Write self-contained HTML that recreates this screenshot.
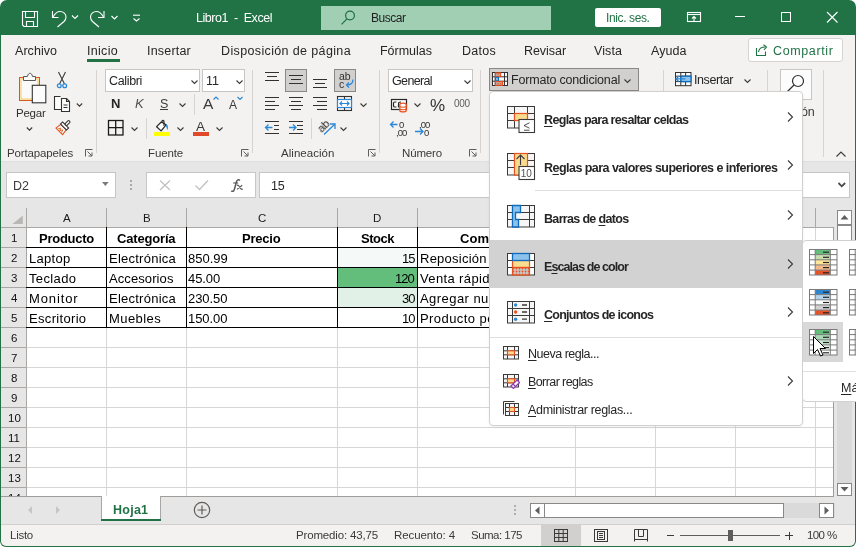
<!DOCTYPE html>
<html><head><meta charset="utf-8"><style>
html,body{margin:0;padding:0;}
body{width:856px;height:547px;position:relative;overflow:hidden;background:#ffffff;font-family:"Liberation Sans",sans-serif;}
body>div,body>svg{position:absolute;}
body>div.t{will-change:transform;}
u{text-decoration:underline;text-underline-offset:2px;text-decoration-thickness:1px;}
</style></head><body>
<div style="left:0px;top:0px;width:856px;height:547px;background:#ffffff;"></div>
<div style="left:0px;top:0px;width:856px;height:547px;background:#217346;border-radius:7px 7px 6px 6px;"></div>
<div style="left:1px;top:35px;width:854px;height:127px;background:#f3f2f1;"></div>
<div style="left:1px;top:161px;width:854px;height:1px;background:#e1dfdd;"></div>
<div style="left:1px;top:162px;width:854px;height:46px;background:#e6e6e6;"></div>
<div style="left:1px;top:208px;width:833px;height:288px;background:#ffffff;"></div>
<div style="left:1px;top:496px;width:854px;height:28px;background:#e6e6e6;"></div>
<div style="left:1px;top:496px;width:854px;height:1px;background:#c8c6c4;"></div>
<div style="left:1px;top:525px;width:854px;height:21px;background:#f3f2f1;border-radius:0 0 5px 5px;"></div>
<div style="left:1px;top:524px;width:854px;height:1px;background:#d2d0ce;"></div>
<div class="t" style="left:196.00px;top:10.69px;font:normal 12.5px 'Liberation Sans';color:#ffffff;white-space:pre;letter-spacing:-0.461px;">Libro1  -  Excel</div>
<div style="left:321px;top:6px;width:230px;height:24px;background:#a0cfb4;"></div>
<div class="t" style="left:371.30px;top:11.14px;font:normal 12px 'Liberation Sans';color:#1f1f1f;white-space:pre;letter-spacing:-0.477px;">Buscar</div>
<div style="left:595px;top:8px;width:66px;height:19px;background:#ffffff;border-radius:2px;"></div>
<div class="t" style="left:606.00px;top:11.14px;font:normal 12px 'Liberation Sans';color:#217346;white-space:pre;letter-spacing:-0.386px;">Inic. ses.</div>
<div class="t" style="left:15.00px;top:43.69px;font:normal 12.5px 'Liberation Sans';color:#262626;white-space:pre;letter-spacing:0.045px;">Archivo</div>
<div class="t" style="left:87.00px;top:43.69px;font:normal 12.5px 'Liberation Sans';color:#262626;white-space:pre;letter-spacing:0.302px;">Inicio</div>
<div class="t" style="left:147.00px;top:43.69px;font:normal 12.5px 'Liberation Sans';color:#262626;white-space:pre;letter-spacing:0.201px;">Insertar</div>
<div class="t" style="left:221.00px;top:43.69px;font:normal 12.5px 'Liberation Sans';color:#262626;white-space:pre;letter-spacing:0.366px;">Disposición de página</div>
<div class="t" style="left:380.00px;top:43.69px;font:normal 12.5px 'Liberation Sans';color:#262626;white-space:pre;letter-spacing:-0.012px;">Fórmulas</div>
<div class="t" style="left:462.00px;top:43.69px;font:normal 12.5px 'Liberation Sans';color:#262626;white-space:pre;letter-spacing:0.269px;">Datos</div>
<div class="t" style="left:524.00px;top:43.69px;font:normal 12.5px 'Liberation Sans';color:#262626;white-space:pre;letter-spacing:-0.054px;">Revisar</div>
<div class="t" style="left:594.00px;top:43.69px;font:normal 12.5px 'Liberation Sans';color:#262626;white-space:pre;letter-spacing:0.084px;">Vista</div>
<div class="t" style="left:651.00px;top:43.69px;font:normal 12.5px 'Liberation Sans';color:#262626;white-space:pre;letter-spacing:0.056px;">Ayuda</div>
<div style="left:87px;top:59px;width:33px;height:3px;background:#217346;"></div>
<div style="left:748px;top:38px;width:95px;height:24px;background:#ffffff;box-sizing:border-box;border:1px solid #d6d4d2;border-radius:3px;"></div>
<div class="t" style="left:772.60px;top:43.69px;font:normal 12.5px 'Liberation Sans';color:#217346;white-space:pre;letter-spacing:0.625px;">Compartir</div>
<svg style="left:754px;top:43px;" width="16" height="15" viewBox="0 0 16 15"><g fill="none" stroke="#217346" stroke-width="1.1"><path d="M2.5 5V12.5H11.5V8.5"/><path d="M4.5 9C5 6 7.5 4 11 4"/><path d="M9.5 1.8L12.5 4L10 6.8"/></g></svg>
<div style="left:6px;top:172px;width:110px;height:26px;background:#ffffff;box-sizing:border-box;border:1px solid #c8c6c4;"></div>
<div class="t" style="left:13.00px;top:178.69px;font:normal 12.5px 'Liberation Sans';color:#3b3a39;white-space:pre;letter-spacing:0.008px;">D2</div>
<svg style="left:100px;top:180px;" width="10" height="8" viewBox="0 0 10 8"><path d="M2 2H8.7L5.35 6Z" fill="#7a7a7a"/></svg>
<div style="left:130px;top:180px;width:2px;height:2px;background:#a8a8a8;"></div>
<div style="left:130px;top:184px;width:2px;height:2px;background:#a8a8a8;"></div>
<div style="left:130px;top:188px;width:2px;height:2px;background:#a8a8a8;"></div>
<div style="left:146px;top:172px;width:110px;height:26px;background:#ffffff;box-sizing:border-box;border:1px solid #c8c6c4;"></div>
<svg style="left:157px;top:178px;" width="16" height="14" viewBox="0 0 16 14"><path d="M3 2.5L13 12M13 2.5L3 12" fill="none" stroke="#c2c2c2" stroke-width="1.3"/></svg>
<svg style="left:193px;top:178px;" width="17" height="14" viewBox="0 0 17 14"><path d="M2.5 7.5L6.5 11.5L15 2.5" fill="none" stroke="#c2c2c2" stroke-width="1.4"/></svg>
<svg style="left:225px;top:174px;" width="25" height="22" viewBox="0 0 25 22"><g fill="none" stroke="#5a5a5a"><path d="M15 6.3C13.5 5.2 12 5.8 11.4 8L9.3 15.6C8.8 17.4 7.5 17.8 6.3 16.8" stroke-width="1.5"/><path d="M8.2 9H13.2" stroke-width="1.1"/><path d="M11.8 11.3C13 11 13.8 11.5 14.3 12.5L15.8 14.6C16.3 15.3 17 15.5 17.8 15M17.2 11.3L12 15.4" stroke-width="1.2"/></g></svg>
<div style="left:259px;top:172px;width:591px;height:26px;background:#ffffff;box-sizing:border-box;border:1px solid #c8c6c4;"></div>
<div class="t" style="left:271.00px;top:178.69px;font:normal 12.5px 'Liberation Sans';color:#262626;white-space:pre;letter-spacing:-0.203px;">15</div>
<div style="left:1px;top:208px;width:833px;height:20px;background:#e6e6e6;"></div>
<div style="left:1px;top:208px;width:26px;height:288px;background:#e6e6e6;"></div>
<div style="left:106px;top:228px;width:1px;height:268px;background:#d6d6d6;"></div>
<div style="left:186px;top:228px;width:1px;height:268px;background:#d6d6d6;"></div>
<div style="left:337px;top:228px;width:1px;height:268px;background:#d6d6d6;"></div>
<div style="left:417px;top:228px;width:1px;height:268px;background:#d6d6d6;"></div>
<div style="left:575px;top:228px;width:1px;height:268px;background:#d6d6d6;"></div>
<div style="left:655px;top:228px;width:1px;height:268px;background:#d6d6d6;"></div>
<div style="left:735px;top:228px;width:1px;height:268px;background:#d6d6d6;"></div>
<div style="left:815px;top:228px;width:1px;height:268px;background:#d6d6d6;"></div>
<div style="left:27px;top:247px;width:807px;height:1px;background:#d6d6d6;"></div>
<div style="left:27px;top:267px;width:807px;height:1px;background:#d6d6d6;"></div>
<div style="left:27px;top:287px;width:807px;height:1px;background:#d6d6d6;"></div>
<div style="left:27px;top:307px;width:807px;height:1px;background:#d6d6d6;"></div>
<div style="left:27px;top:327px;width:807px;height:1px;background:#d6d6d6;"></div>
<div style="left:27px;top:347px;width:807px;height:1px;background:#d6d6d6;"></div>
<div style="left:27px;top:367px;width:807px;height:1px;background:#d6d6d6;"></div>
<div style="left:27px;top:387px;width:807px;height:1px;background:#d6d6d6;"></div>
<div style="left:27px;top:407px;width:807px;height:1px;background:#d6d6d6;"></div>
<div style="left:27px;top:427px;width:807px;height:1px;background:#d6d6d6;"></div>
<div style="left:27px;top:447px;width:807px;height:1px;background:#d6d6d6;"></div>
<div style="left:27px;top:467px;width:807px;height:1px;background:#d6d6d6;"></div>
<div style="left:27px;top:487px;width:807px;height:1px;background:#d6d6d6;"></div>
<div style="left:27px;top:507px;width:807px;height:1px;background:#d6d6d6;"></div>
<div style="left:106px;top:208px;width:1px;height:20px;background:#aba7a5;"></div>
<div style="left:186px;top:208px;width:1px;height:20px;background:#aba7a5;"></div>
<div style="left:337px;top:208px;width:1px;height:20px;background:#aba7a5;"></div>
<div style="left:417px;top:208px;width:1px;height:20px;background:#aba7a5;"></div>
<div style="left:575px;top:208px;width:1px;height:20px;background:#aba7a5;"></div>
<div style="left:655px;top:208px;width:1px;height:20px;background:#aba7a5;"></div>
<div style="left:735px;top:208px;width:1px;height:20px;background:#aba7a5;"></div>
<div style="left:815px;top:208px;width:1px;height:20px;background:#aba7a5;"></div>
<div style="left:26px;top:208px;width:1px;height:288px;background:#aba7a5;"></div>
<div style="left:1px;top:227px;width:833px;height:1px;background:#aba7a5;"></div>
<div style="left:1px;top:247px;width:26px;height:1px;background:#aba7a5;"></div>
<div style="left:1px;top:267px;width:26px;height:1px;background:#aba7a5;"></div>
<div style="left:1px;top:287px;width:26px;height:1px;background:#aba7a5;"></div>
<div style="left:1px;top:307px;width:26px;height:1px;background:#aba7a5;"></div>
<div style="left:1px;top:327px;width:26px;height:1px;background:#aba7a5;"></div>
<div style="left:1px;top:347px;width:26px;height:1px;background:#aba7a5;"></div>
<div style="left:1px;top:367px;width:26px;height:1px;background:#aba7a5;"></div>
<div style="left:1px;top:387px;width:26px;height:1px;background:#aba7a5;"></div>
<div style="left:1px;top:407px;width:26px;height:1px;background:#aba7a5;"></div>
<div style="left:1px;top:427px;width:26px;height:1px;background:#aba7a5;"></div>
<div style="left:1px;top:447px;width:26px;height:1px;background:#aba7a5;"></div>
<div style="left:1px;top:467px;width:26px;height:1px;background:#aba7a5;"></div>
<div style="left:1px;top:487px;width:26px;height:1px;background:#aba7a5;"></div>
<div style="left:1px;top:507px;width:26px;height:1px;background:#aba7a5;"></div>
<svg style="left:10px;top:214px;" width="14" height="11" viewBox="0 0 14 11"><path d="M12.8 1.5V10H2.5Z" fill="#b9b7b5"/></svg>
<div class="t" style="left:62.66px;top:211.59px;font:normal 11.5px 'Liberation Sans';color:#1a1a1a;white-space:pre;">A</div>
<div class="t" style="left:142.66px;top:211.59px;font:normal 11.5px 'Liberation Sans';color:#1a1a1a;white-space:pre;">B</div>
<div class="t" style="left:257.84px;top:211.59px;font:normal 11.5px 'Liberation Sans';color:#1a1a1a;white-space:pre;">C</div>
<div class="t" style="left:373.34px;top:211.59px;font:normal 11.5px 'Liberation Sans';color:#1a1a1a;white-space:pre;">D</div>
<div class="t" style="left:492.66px;top:211.59px;font:normal 11.5px 'Liberation Sans';color:#1a1a1a;white-space:pre;">E</div>
<div class="t" style="left:611.98px;top:211.59px;font:normal 11.5px 'Liberation Sans';color:#1a1a1a;white-space:pre;">F</div>
<div class="t" style="left:691.02px;top:211.59px;font:normal 11.5px 'Liberation Sans';color:#1a1a1a;white-space:pre;">G</div>
<div class="t" style="left:771.34px;top:211.59px;font:normal 11.5px 'Liberation Sans';color:#1a1a1a;white-space:pre;">H</div>
<div class="t" style="left:10.80px;top:232.39px;font:normal 11.5px 'Liberation Sans';color:#111111;white-space:pre;">1</div>
<div class="t" style="left:10.80px;top:252.39px;font:normal 11.5px 'Liberation Sans';color:#111111;white-space:pre;">2</div>
<div class="t" style="left:10.80px;top:272.39px;font:normal 11.5px 'Liberation Sans';color:#111111;white-space:pre;">3</div>
<div class="t" style="left:10.80px;top:292.39px;font:normal 11.5px 'Liberation Sans';color:#111111;white-space:pre;">4</div>
<div class="t" style="left:10.80px;top:312.39px;font:normal 11.5px 'Liberation Sans';color:#111111;white-space:pre;">5</div>
<div class="t" style="left:10.80px;top:332.39px;font:normal 11.5px 'Liberation Sans';color:#111111;white-space:pre;">6</div>
<div class="t" style="left:10.80px;top:352.39px;font:normal 11.5px 'Liberation Sans';color:#111111;white-space:pre;">7</div>
<div class="t" style="left:10.80px;top:372.39px;font:normal 11.5px 'Liberation Sans';color:#111111;white-space:pre;">8</div>
<div class="t" style="left:10.80px;top:392.39px;font:normal 11.5px 'Liberation Sans';color:#111111;white-space:pre;">9</div>
<div class="t" style="left:7.60px;top:412.39px;font:normal 11.5px 'Liberation Sans';color:#111111;white-space:pre;">10</div>
<div class="t" style="left:8.02px;top:432.39px;font:normal 11.5px 'Liberation Sans';color:#111111;white-space:pre;">11</div>
<div class="t" style="left:7.60px;top:452.39px;font:normal 11.5px 'Liberation Sans';color:#111111;white-space:pre;">12</div>
<div class="t" style="left:7.60px;top:472.39px;font:normal 11.5px 'Liberation Sans';color:#111111;white-space:pre;">13</div>
<div class="t" style="left:7.60px;top:492.39px;font:normal 11.5px 'Liberation Sans';color:#111111;white-space:pre;">14</div>
<div style="left:337px;top:248px;width:80px;height:19px;background:#f5f9f8;"></div>
<div style="left:337px;top:268px;width:80px;height:19px;background:#63be7b;"></div>
<div style="left:337px;top:288px;width:80px;height:19px;background:#e2f1e7;"></div>
<div style="left:26px;top:247px;width:550px;height:1px;background:#000000;"></div>
<div style="left:26px;top:267px;width:550px;height:1px;background:#000000;"></div>
<div style="left:26px;top:287px;width:550px;height:1px;background:#000000;"></div>
<div style="left:26px;top:307px;width:550px;height:1px;background:#000000;"></div>
<div style="left:26px;top:327px;width:550px;height:1px;background:#000000;"></div>
<div style="left:106px;top:227px;width:1px;height:101px;background:#000000;"></div>
<div style="left:186px;top:227px;width:1px;height:101px;background:#000000;"></div>
<div style="left:337px;top:227px;width:1px;height:101px;background:#000000;"></div>
<div style="left:417px;top:227px;width:1px;height:101px;background:#000000;"></div>
<div style="left:575px;top:227px;width:1px;height:101px;background:#000000;"></div>
<div class="t" style="left:38.50px;top:230.74px;font:bold 13px 'Liberation Sans';color:#000000;white-space:pre;letter-spacing:-0.258px;">Producto</div>
<div class="t" style="left:117.30px;top:230.74px;font:bold 13px 'Liberation Sans';color:#000000;white-space:pre;letter-spacing:-0.174px;">Categoría</div>
<div class="t" style="left:241.70px;top:230.74px;font:bold 13px 'Liberation Sans';color:#000000;white-space:pre;letter-spacing:-0.208px;">Precio</div>
<div class="t" style="left:361.30px;top:230.74px;font:bold 13px 'Liberation Sans';color:#000000;white-space:pre;letter-spacing:-0.481px;">Stock</div>
<div class="t" style="left:459.60px;top:230.74px;font:bold 13px 'Liberation Sans';color:#000000;white-space:pre;letter-spacing:0.077px;">Comentario</div>
<div class="t" style="left:28.90px;top:250.74px;font:normal 13px 'Liberation Sans';color:#000000;white-space:pre;letter-spacing:0.289px;">Laptop</div>
<div class="t" style="left:109.30px;top:250.74px;font:normal 13px 'Liberation Sans';color:#000000;white-space:pre;letter-spacing:0.244px;">Electrónica</div>
<div class="t" style="left:188.20px;top:250.74px;font:normal 13px 'Liberation Sans';color:#000000;white-space:pre;letter-spacing:-0.011px;">850.99</div>
<div class="t" style="left:401.50px;top:250.74px;font:normal 13px 'Liberation Sans';color:#000000;white-space:pre;letter-spacing:-1.084px;">15</div>
<div class="t" style="left:420.00px;top:250.74px;font:normal 13px 'Liberation Sans';color:#000000;white-space:pre;letter-spacing:0.246px;">Reposición  </div>
<div class="t" style="left:28.90px;top:270.74px;font:normal 13px 'Liberation Sans';color:#000000;white-space:pre;letter-spacing:0.370px;">Teclado</div>
<div class="t" style="left:109.30px;top:270.74px;font:normal 13px 'Liberation Sans';color:#000000;white-space:pre;letter-spacing:0.092px;">Accesorios</div>
<div class="t" style="left:188.20px;top:270.74px;font:normal 13px 'Liberation Sans';color:#000000;white-space:pre;letter-spacing:-0.069px;">45.00</div>
<div class="t" style="left:395.20px;top:270.74px;font:normal 13px 'Liberation Sans';color:#000000;white-space:pre;letter-spacing:-1.034px;">120</div>
<div class="t" style="left:420.00px;top:270.74px;font:normal 13px 'Liberation Sans';color:#000000;white-space:pre;letter-spacing:0.374px;">Venta rápida</div>
<div class="t" style="left:28.90px;top:290.74px;font:normal 13px 'Liberation Sans';color:#000000;white-space:pre;letter-spacing:0.877px;">Monitor</div>
<div class="t" style="left:109.30px;top:290.74px;font:normal 13px 'Liberation Sans';color:#000000;white-space:pre;letter-spacing:0.244px;">Electrónica</div>
<div class="t" style="left:188.20px;top:290.74px;font:normal 13px 'Liberation Sans';color:#000000;white-space:pre;letter-spacing:-0.078px;">230.50</div>
<div class="t" style="left:401.50px;top:290.74px;font:normal 13px 'Liberation Sans';color:#000000;white-space:pre;letter-spacing:-1.084px;">30</div>
<div class="t" style="left:420.00px;top:290.74px;font:normal 13px 'Liberation Sans';color:#000000;white-space:pre;letter-spacing:0.440px;">Agregar nuevo</div>
<div class="t" style="left:28.90px;top:310.74px;font:normal 13px 'Liberation Sans';color:#000000;white-space:pre;letter-spacing:0.321px;">Escritorio</div>
<div class="t" style="left:109.30px;top:310.74px;font:normal 13px 'Liberation Sans';color:#000000;white-space:pre;letter-spacing:0.437px;">Muebles</div>
<div class="t" style="left:188.20px;top:310.74px;font:normal 13px 'Liberation Sans';color:#000000;white-space:pre;letter-spacing:-0.078px;">150.00</div>
<div class="t" style="left:401.50px;top:310.74px;font:normal 13px 'Liberation Sans';color:#000000;white-space:pre;letter-spacing:-1.084px;">10</div>
<div class="t" style="left:420.00px;top:310.74px;font:normal 13px 'Liberation Sans';color:#000000;white-space:pre;letter-spacing:0.437px;">Producto popular</div>
<svg style="left:20px;top:9px;" width="20" height="20" viewBox="0 0 20 20"><g fill="none" stroke="#ffffff" stroke-width="1.1"><path d="M2.5 2.5H17.5V17.5H4L2.5 16Z"/><path d="M5.5 2.5V8.5H14.5V2.5"/><path d="M6.5 17.5V12.5H13.5V17.5"/></g></svg>
<svg style="left:49px;top:9px;" width="20" height="20" viewBox="0 0 20 20"><g fill="none" stroke="#ffffff" stroke-width="1.1"><path d="M3.5 2V8.5H9.5"/><path d="M4 8C6 4.5 8.5 2.5 11 2.5C14.5 2.5 17 5 17 8C17 10 16 11.5 15 12.5L8.5 18"/></g></svg>
<svg style="left:71px;top:14px;" width="8" height="6" viewBox="0 0 8 6"><path d="M1 1.5L4 4.5L7 1.5" fill="none" stroke="#ffffff" stroke-width="1.1"/></svg>
<svg style="left:89px;top:9px;" width="20" height="20" viewBox="0 0 20 20"><g transform="translate(18.5 0) scale(-1 1)" fill="none" stroke="#ffffff" stroke-width="1.1"><path d="M3.5 2V8.5H9.5"/><path d="M4 8C6 4.5 8.5 2.5 11 2.5C14.5 2.5 17 5 17 8C17 10 16 11.5 15 12.5L8.5 18"/></g></svg>
<svg style="left:110px;top:14px;" width="9" height="7" viewBox="0 0 9 7"><path d="M1.5 2L4.5 5L7.5 2" fill="none" stroke="#ffffff" stroke-width="1.1"/></svg>
<svg style="left:131px;top:13px;" width="11" height="10" viewBox="0 0 11 10"><g fill="none" stroke="#ffffff" stroke-width="1.1"><path d="M2 2.2H9"/><path d="M2.5 5.5L5.5 8L8.5 5.5"/></g></svg>
<svg style="left:338px;top:8px;" width="20" height="20" viewBox="0 0 20 20"><g fill="none" stroke="#1e6e3e" stroke-width="1.2"><circle cx="12" cy="7.5" r="4.4"/><path d="M9 10.8L3.5 16.3"/></g></svg>
<svg style="left:684px;top:10px;" width="18" height="14" viewBox="0 0 18 14"><g fill="none" stroke="#ffffff" stroke-width="1.1"><rect x="3.5" y="2.5" width="13" height="9"/><path d="M3.5 4.5H16.5"/><path d="M10 11V6.5M8 8.5L10 6.5L12 8.5"/></g></svg>
<div style="left:735px;top:16px;width:10px;height:1px;background:#ffffff;"></div>
<svg style="left:779px;top:10px;" width="14" height="14" viewBox="0 0 14 14"><rect x="2.5" y="2.5" width="9" height="9" fill="none" stroke="#ffffff" stroke-width="1"/></svg>
<svg style="left:825px;top:10px;" width="14" height="14" viewBox="0 0 14 14"><path d="M2 2L12.5 12.5M12.5 2L2 12.5" fill="none" stroke="#ffffff" stroke-width="1.1"/></svg>
<svg style="left:17px;top:71px;" width="32" height="34" viewBox="0 0 32 34"><g>
<rect x="2.5" y="6.5" width="20" height="23" fill="#fdf3dc" stroke="#d65a1e" stroke-width="1"/>
<rect x="4" y="8" width="17" height="20" fill="#fafafa" stroke="#f6d27a" stroke-width="1.2"/>
<path d="M6.5 9.5V5.5H10.5C11 3 12 2.3 13 2.3C14 2.3 15 3 15.5 5.5H18.5V9.5Z" fill="#fafafa" stroke="#5a5a5a" stroke-width="1"/>
<rect x="15.3" y="14.3" width="13.5" height="17.5" fill="#fcfcfc" stroke="#333333" stroke-width="1.1"/>
</g></svg>
<div class="t" style="left:15.50px;top:107.09px;font:normal 11.5px 'Liberation Sans';color:#323130;white-space:pre;letter-spacing:-0.237px;">Pegar</div>
<svg style="left:25px;top:125px;" width="9" height="8" viewBox="0 0 9 8"><path d="M1.8 2.5L4.5 5.2L7.2 2.5" fill="none" stroke="#3b3a39" stroke-width="1.1"/></svg>
<svg style="left:55px;top:71px;" width="14" height="18" viewBox="0 0 14 18"><g fill="none" stroke-width="1.1">
<path d="M3.5 1L9.5 13M10.5 1L4.5 13" stroke="#3b3a39"/>
<circle cx="4.3" cy="14.8" r="1.9" stroke="#2b88d8" stroke-width="1.3"/>
<circle cx="9.7" cy="14.8" r="1.9" stroke="#2b88d8" stroke-width="1.3"/>
</g></svg>
<svg style="left:52px;top:94px;" width="20" height="20" viewBox="0 0 20 20"><g fill="#fcfcfc" stroke="#333333" stroke-width="1.1">
<path d="M9 15.5H2.5V2.5H8.5"/>
<path d="M9.5 4.5H14.5L17.5 7.5V17.5H9.5Z"/>
<path d="M14.5 4.5V7.5H17.5" fill="none"/>
<path d="M11.5 11H15.5M11.5 13.5H15.5" fill="none" stroke-width="1"/>
</g></svg>
<svg style="left:75px;top:101px;" width="9" height="8" viewBox="0 0 9 8"><path d="M1.8 2.5L4.5 5.2L7.2 2.5" fill="none" stroke="#3b3a39" stroke-width="1.1"/></svg>
<svg style="left:50px;top:114px;" width="26" height="24" viewBox="0 0 26 24"><g transform="translate(13.2 13.4) rotate(45) scale(0.85)" stroke-width="1.25">
<path d="M-4.5 -0.5L-5.5 6.5H5.5L4.5 -0.5Z" fill="#fcfcfc" stroke="#e0531f"/>
<path d="M-3 5.5L-1.5 2.5L0 5.5L1.5 2.5L3 5.5" stroke="#e0531f" stroke-width="0.9" fill="#fbe3a0"/>
<rect x="-5" y="-4" width="10" height="3.5" fill="#fcfcfc" stroke="#333"/>
<rect x="-1.5" y="-10.5" width="3" height="6.5" rx="1.2" fill="#fcfcfc" stroke="#333"/>
</g></svg>
<div class="t" style="left:6.70px;top:147.09px;font:normal 11.5px 'Liberation Sans';color:#3b3a39;white-space:pre;letter-spacing:-0.148px;">Portapapeles</div>
<svg style="left:84px;top:148px;" width="10" height="10" viewBox="0 0 10 10"><g fill="none" stroke="#605e5c" stroke-width="1"><path d="M1.5 8.5V1.5H8.5"/><path d="M3.5 3.5L8 8M8 4.5V8H4.5"/></g></svg>
<div style="left:96px;top:70px;width:1px;height:83px;background:#d6d4d2;"></div>
<div style="left:105px;top:69px;width:95px;height:23px;background:#ffffff;box-sizing:border-box;border:1px solid #c8c6c4;"></div>
<div class="t" style="left:108.50px;top:73.69px;font:normal 12.5px 'Liberation Sans';color:#262626;white-space:pre;letter-spacing:-0.348px;">Calibri</div>
<svg style="left:189.5px;top:77.5px;" width="9" height="8" viewBox="0 0 9 8"><path d="M1.5 2.5L4.5 5.5L7.5 2.5" fill="none" stroke="#3b3a39" stroke-width="1.1"/></svg>
<div style="left:202px;top:69px;width:43px;height:23px;background:#ffffff;box-sizing:border-box;border:1px solid #c8c6c4;"></div>
<div class="t" style="left:205.50px;top:73.69px;font:normal 12.5px 'Liberation Sans';color:#262626;white-space:pre;">11</div>
<svg style="left:234.5px;top:77.5px;" width="9" height="8" viewBox="0 0 9 8"><path d="M1.5 2.5L4.5 5.5L7.5 2.5" fill="none" stroke="#3b3a39" stroke-width="1.1"/></svg>
<div class="t" style="left:110.50px;top:96.24px;font:bold 13px 'Liberation Sans';color:#262626;white-space:pre;letter-spacing:0.609px;">N</div>
<div class="t" style="left:135.00px;top:96.24px;font:normal 13px 'Liberation Sans';color:#505050;white-space:pre;letter-spacing:0.328px;font-style:italic;">K</div>
<div class="t" style="left:160.00px;top:96.69px;font:normal 12.5px 'Liberation Sans';color:#3b3a39;white-space:pre;letter-spacing:-0.344px;">S</div>
<div style="left:160px;top:109px;width:8px;height:1px;background:#3b3a39;"></div>
<svg style="left:177.5px;top:100.5px;" width="9" height="8" viewBox="0 0 9 8"><path d="M1.5 2.5L4.5 5.5L7.5 2.5" fill="none" stroke="#3b3a39" stroke-width="1.1"/></svg>
<div style="left:194px;top:94px;width:1px;height:21px;background:#d6d4d2;"></div>
<div class="t" style="left:203.00px;top:94.67px;font:normal 15.5px 'Liberation Sans';color:#3b3a39;white-space:pre;letter-spacing:0.656px;">A</div>
<svg style="left:212px;top:95px;" width="8" height="6" viewBox="0 0 8 6"><path d="M1.5 4.5L4 2L6.5 4.5" fill="none" stroke="#2b88d8" stroke-width="1.2"/></svg>
<div class="t" style="left:228.50px;top:97.84px;font:normal 12px 'Liberation Sans';color:#3b3a39;white-space:pre;letter-spacing:0.484px;">A</div>
<svg style="left:236px;top:95px;" width="8" height="6" viewBox="0 0 8 6"><path d="M1.5 2L4 4.5L6.5 2" fill="none" stroke="#2b88d8" stroke-width="1.2"/></svg>
<svg style="left:106px;top:118px;" width="19" height="19" viewBox="0 0 19 19"><g fill="none" stroke="#1b1b1b" stroke-width="1.3"><rect x="2.5" y="2.5" width="14.5" height="14.5"/><path d="M9.7 2.5V17M2.5 9.7H17"/></g></svg>
<svg style="left:129.5px;top:124.5px;" width="9" height="8" viewBox="0 0 9 8"><path d="M1.5 2.5L4.5 5.5L7.5 2.5" fill="none" stroke="#3b3a39" stroke-width="1.1"/></svg>
<div style="left:146px;top:118px;width:1px;height:21px;background:#d6d4d2;"></div>
<svg style="left:150px;top:116px;" width="24" height="18" viewBox="0 0 24 18"><g stroke-width="1.2">
<path d="M6.6 10.7L11.3 6L16.1 8.8L11.1 14.9Z" fill="#fcfcfc" stroke="#262626" stroke-linejoin="round"/>
<path d="M11.8 6.5C11.8 4 13.9 3.5 14 6V9.8" fill="none" stroke="#262626"/>
<path d="M15.8 8.3C17.6 8.2 18.6 10.5 17.6 14.2C16.8 12.5 16.4 11 16 10Z" fill="#2b88d8"/>
</g></svg>
<div style="left:154px;top:132px;width:16px;height:4px;background:#ffff00;"></div>
<svg style="left:175.5px;top:124.5px;" width="9" height="8" viewBox="0 0 9 8"><path d="M1.5 2.5L4.5 5.5L7.5 2.5" fill="none" stroke="#3b3a39" stroke-width="1.1"/></svg>
<div class="t" style="left:195.50px;top:118.78px;font:normal 13.5px 'Liberation Sans';color:#3b3a39;white-space:pre;letter-spacing:1.484px;">A</div>
<div style="left:193px;top:132px;width:16px;height:4px;background:#e0492a;"></div>
<svg style="left:214.5px;top:124.5px;" width="9" height="8" viewBox="0 0 9 8"><path d="M1.5 2.5L4.5 5.5L7.5 2.5" fill="none" stroke="#3b3a39" stroke-width="1.1"/></svg>
<div class="t" style="left:148.30px;top:146.89px;font:normal 11.5px 'Liberation Sans';color:#3b3a39;white-space:pre;letter-spacing:-0.135px;">Fuente</div>
<svg style="left:240px;top:148px;" width="10" height="10" viewBox="0 0 10 10"><g fill="none" stroke="#605e5c" stroke-width="1"><path d="M1.5 8.5V1.5H8.5"/><path d="M3.5 3.5L8 8M8 4.5V8H4.5"/></g></svg>
<div style="left:252px;top:70px;width:1px;height:83px;background:#d6d4d2;"></div>
<div style="left:265px;top:72px;width:14px;height:1px;background:#323130;"></div>
<div style="left:267px;top:76px;width:10px;height:1px;background:#323130;"></div>
<div style="left:265px;top:80px;width:14px;height:1px;background:#323130;"></div>
<div style="left:285px;top:69px;width:22px;height:23px;background:#d2d0ce;box-sizing:border-box;border:1px solid #8a8886;"></div>
<div style="left:289px;top:75px;width:14px;height:1px;background:#323130;"></div>
<div style="left:291px;top:79px;width:10px;height:1px;background:#323130;"></div>
<div style="left:289px;top:83px;width:14px;height:1px;background:#323130;"></div>
<div style="left:313px;top:79px;width:14px;height:1px;background:#323130;"></div>
<div style="left:315px;top:83px;width:10px;height:1px;background:#323130;"></div>
<div style="left:313px;top:87px;width:14px;height:1px;background:#323130;"></div>
<div style="left:265px;top:97px;width:14px;height:1px;background:#323130;"></div>
<div style="left:265px;top:101px;width:10px;height:1px;background:#323130;"></div>
<div style="left:265px;top:105px;width:14px;height:1px;background:#323130;"></div>
<div style="left:265px;top:109px;width:10px;height:1px;background:#323130;"></div>
<div style="left:289px;top:97px;width:14px;height:1px;background:#323130;"></div>
<div style="left:291px;top:101px;width:10px;height:1px;background:#323130;"></div>
<div style="left:289px;top:105px;width:14px;height:1px;background:#323130;"></div>
<div style="left:291px;top:109px;width:10px;height:1px;background:#323130;"></div>
<div style="left:313px;top:97px;width:14px;height:1px;background:#323130;"></div>
<div style="left:317px;top:101px;width:10px;height:1px;background:#323130;"></div>
<div style="left:313px;top:105px;width:14px;height:1px;background:#323130;"></div>
<div style="left:317px;top:109px;width:10px;height:1px;background:#323130;"></div>
<div style="left:334px;top:69px;width:22px;height:23px;background:#d2d0ce;box-sizing:border-box;border:1px solid #8a8886;"></div>
<div class="t" style="left:339.30px;top:70.30px;font:normal 10.5px 'Liberation Sans';color:#323130;white-space:pre;letter-spacing:-0.094px;">ab</div>
<div class="t" style="left:339.30px;top:77.90px;font:normal 10.5px 'Liberation Sans';color:#323130;white-space:pre;letter-spacing:0.250px;">c</div>
<svg style="left:344px;top:78px;" width="12" height="10" viewBox="0 0 12 10"><g fill="none" stroke="#2b88d8" stroke-width="1.3"><path d="M9 1.5C9 5 7 7 3 7"/><path d="M5 4.5L2.5 7L5 9.5"/></g></svg>
<svg style="left:336px;top:95px;" width="17" height="17" viewBox="0 0 17 17"><g fill="none" stroke-width="1.1">
<rect x="1.5" y="1.5" width="14" height="14" stroke="#323130"/>
<path d="M8.5 1.5V4.5M8.5 12.5V15.5" stroke="#323130"/>
<rect x="1.5" y="4.5" width="14" height="8" stroke="#2b88d8" stroke-width="1.2" fill="#ffffff"/>
<path d="M4 8.5H13M6 6.5L4 8.5L6 10.5M11 6.5L13 8.5L11 10.5" stroke="#2b88d8" stroke-width="1.2"/>
</g></svg>
<svg style="left:358.8px;top:100.8px;" width="9" height="8" viewBox="0 0 9 8"><path d="M1.5 2.5L4.5 5.5L7.5 2.5" fill="none" stroke="#3b3a39" stroke-width="1.1"/></svg>
<div style="left:265px;top:121px;width:14px;height:1px;background:#323130;"></div>
<div style="left:274px;top:125px;width:5px;height:1px;background:#323130;"></div>
<div style="left:274px;top:129px;width:5px;height:1px;background:#323130;"></div>
<div style="left:265px;top:133px;width:14px;height:1px;background:#323130;"></div>
<div style="left:289px;top:121px;width:14px;height:1px;background:#323130;"></div>
<div style="left:297px;top:125px;width:6px;height:1px;background:#323130;"></div>
<div style="left:297px;top:129px;width:6px;height:1px;background:#323130;"></div>
<div style="left:289px;top:133px;width:14px;height:1px;background:#323130;"></div>
<svg style="left:264px;top:123px;" width="10" height="9" viewBox="0 0 10 9"><g fill="none" stroke="#2b88d8" stroke-width="1.3"><path d="M1.5 4.5H8.5M4.5 1.5L1.5 4.5L4.5 7.5"/></g></svg>
<svg style="left:288px;top:123px;" width="10" height="9" viewBox="0 0 10 9"><g fill="none" stroke="#2b88d8" stroke-width="1.3"><path d="M1 4.5H8M5 1.5L8 4.5L5 7.5"/></g></svg>
<div style="left:311px;top:118px;width:1px;height:21px;background:#d6d4d2;"></div>
<div class="t" style="left:0.00px;top:-10.41px;font:normal 11.5px 'Liberation Sans';color:#262626;white-space:pre;letter-spacing:-0.398px;left:322px;top:122.5px;transform:rotate(-45deg);transform-origin:0 10.4px;">ab</div>
<svg style="left:322px;top:122px;" width="16" height="15" viewBox="0 0 16 15"><g fill="none" stroke="#2b88d8" stroke-width="1.3"><path d="M2 12.5L13 2"/><path d="M8 2H13V7"/></g></svg>
<svg style="left:338.8px;top:124.8px;" width="9" height="8" viewBox="0 0 9 8"><path d="M1.5 2.5L4.5 5.5L7.5 2.5" fill="none" stroke="#3b3a39" stroke-width="1.1"/></svg>
<div class="t" style="left:281.00px;top:147.09px;font:normal 11.5px 'Liberation Sans';color:#3b3a39;white-space:pre;letter-spacing:0.042px;">Alineación</div>
<svg style="left:367px;top:148px;" width="10" height="10" viewBox="0 0 10 10"><g fill="none" stroke="#605e5c" stroke-width="1"><path d="M1.5 8.5V1.5H8.5"/><path d="M3.5 3.5L8 8M8 4.5V8H4.5"/></g></svg>
<div style="left:379px;top:70px;width:1px;height:83px;background:#d6d4d2;"></div>
<div style="left:388px;top:69px;width:85px;height:23px;background:#ffffff;box-sizing:border-box;border:1px solid #c8c6c4;"></div>
<div class="t" style="left:391.50px;top:73.69px;font:normal 12.5px 'Liberation Sans';color:#262626;white-space:pre;letter-spacing:-0.641px;">General</div>
<svg style="left:462.5px;top:77.5px;" width="9" height="8" viewBox="0 0 9 8"><path d="M1.5 2.5L4.5 5.5L7.5 2.5" fill="none" stroke="#3b3a39" stroke-width="1.1"/></svg>
<svg style="left:390px;top:98px;" width="20" height="16" viewBox="0 0 20 16"><g stroke-width="1.2">
<rect x="1.5" y="1.5" width="15" height="10" fill="#fcfcfc" stroke="#262626"/>
<path d="M6.5 4H4.8C4 4 3.5 4.5 3.5 5.3V7.7C3.5 8.5 4 9 4.8 9H6.5M8.5 9.5V5.5C8.5 4.5 9.3 4 11 4" fill="none" stroke="#262626"/>
<path d="M9.8 6.5C9.8 4.7 16.2 4.7 16.2 6.5V12.5C16.2 14.3 9.8 14.3 9.8 12.5Z" fill="#fcfcfc" stroke="#e8511f" stroke-width="1.3"/>
<path d="M9.8 8.5C10.5 9.5 15.5 9.5 16.2 8.5M9.8 11C10.5 12 15.5 12 16.2 11" fill="none" stroke="#e8511f" stroke-width="1.2"/>
</g></svg>
<svg style="left:412.8px;top:101px;" width="9" height="8" viewBox="0 0 9 8"><path d="M1.5 2.5L4.5 5.5L7.5 2.5" fill="none" stroke="#3b3a39" stroke-width="1.1"/></svg>
<div class="t" style="left:429.80px;top:95.82px;font:normal 17px 'Liberation Sans';color:#323130;white-space:pre;letter-spacing:0.375px;">%</div>
<div class="t" style="left:454.00px;top:98.45px;font:normal 10px 'Liberation Sans';color:#605e5c;white-space:pre;letter-spacing:-0.329px;">000</div>
<div class="t" style="left:399.00px;top:119.40px;font:normal 9.5px 'Liberation Sans';color:#323130;white-space:pre;letter-spacing:0.203px;">0</div>
<div class="t" style="left:396.00px;top:126.90px;font:normal 9.5px 'Liberation Sans';color:#323130;white-space:pre;letter-spacing:-0.906px;">,00</div>
<svg style="left:389px;top:120px;" width="10" height="9" viewBox="0 0 10 9"><g fill="none" stroke="#2b88d8" stroke-width="1.3"><path d="M1.5 4.5H8.5M4.5 1.5L1.5 4.5L4.5 7.5"/></g></svg>
<div class="t" style="left:419.00px;top:119.40px;font:normal 9.5px 'Liberation Sans';color:#323130;white-space:pre;letter-spacing:-0.906px;">,00</div>
<div class="t" style="left:424.00px;top:126.90px;font:normal 9.5px 'Liberation Sans';color:#323130;white-space:pre;letter-spacing:0.203px;">0</div>
<svg style="left:414px;top:127px;" width="11" height="9" viewBox="0 0 11 9"><g fill="none" stroke="#2b88d8" stroke-width="1.3"><path d="M1 4.5H9M6 1.5L9 4.5L6 7.5"/></g></svg>
<div class="t" style="left:401.50px;top:147.09px;font:normal 11.5px 'Liberation Sans';color:#3b3a39;white-space:pre;letter-spacing:-0.151px;">Número</div>
<svg style="left:468px;top:148px;" width="10" height="10" viewBox="0 0 10 10"><g fill="none" stroke="#605e5c" stroke-width="1"><path d="M1.5 8.5V1.5H8.5"/><path d="M3.5 3.5L8 8M8 4.5V8H4.5"/></g></svg>
<div style="left:480px;top:70px;width:1px;height:83px;background:#d6d4d2;"></div>
<div style="left:489px;top:68px;width:150px;height:23px;background:#d2d0ce;box-sizing:border-box;border:1px solid #8a8886;"></div>
<svg style="left:490px;top:70px;" width="20" height="18" viewBox="0 0 20 18"><g stroke-width="1">
<rect x="2.5" y="2.5" width="15" height="13" fill="#fcfcfc" stroke="#323130"/>
<path d="M2.5 6.8H17.5M2.5 11.2H17.5M5.2 2.5V15.5M14.5 2.5V15.5" stroke="#323130" fill="none"/>
<rect x="5.5" y="3" width="5" height="3.5" fill="#bdbdbd" stroke="#e8511f" stroke-width="1.3"/>
<circle cx="8" cy="4.8" r="0.7" fill="#e8511f"/>
<rect x="5.5" y="7.3" width="3" height="3.5" fill="#8cc2ec" stroke="#0f6cbd" stroke-width="1.1"/>
<rect x="5.5" y="11.6" width="7" height="3.6" fill="#bdbdbd" stroke="#e8511f" stroke-width="1.3"/>
<circle cx="8" cy="13.4" r="0.7" fill="#e8511f"/><circle cx="10.2" cy="13.4" r="0.7" fill="#e8511f"/>
</g></svg>
<div class="t" style="left:511.00px;top:73.19px;font:normal 12.5px 'Liberation Sans';color:#262626;white-space:pre;letter-spacing:-0.188px;">Formato condicional</div>
<svg style="left:622.5px;top:76.5px;" width="9" height="8" viewBox="0 0 9 8"><path d="M1.5 2.5L4.5 5.5L7.5 2.5" fill="none" stroke="#3b3a39" stroke-width="1.1"/></svg>
<div style="left:663px;top:70px;width:1px;height:83px;background:#d6d4d2;"></div>
<svg style="left:673px;top:70px;" width="20" height="18" viewBox="0 0 20 18"><g stroke-width="1">
<rect x="2.5" y="2.5" width="15.5" height="13.2" fill="#fcfcfc" stroke="#323130"/>
<path d="M2.5 6.2H18M2.5 11.6H18M7.8 2.5V15.7M12.6 2.5V15.7" stroke="#323130" fill="none"/>
<rect x="8" y="6.2" width="10" height="5.4" fill="#8cc2ec" stroke="#0f6cbd" stroke-width="1.3"/>
<path d="M12.5 8.9H3M5.8 6.3L3 8.9L5.8 11.5" stroke="#2b88d8" stroke-width="1.3" fill="none"/>
</g></svg>
<div class="t" style="left:694.00px;top:72.69px;font:normal 12.5px 'Liberation Sans';color:#262626;white-space:pre;letter-spacing:-0.424px;">Insertar</div>
<svg style="left:742.5px;top:76.5px;" width="9" height="8" viewBox="0 0 9 8"><path d="M1.5 2.5L4.5 5.5L7.5 2.5" fill="none" stroke="#3b3a39" stroke-width="1.1"/></svg>
<div style="left:767px;top:70px;width:1px;height:83px;background:#d6d4d2;"></div>
<div style="left:780px;top:69px;width:32px;height:31px;background:#fcfcfc;box-sizing:border-box;border:1px solid #c8c6c4;"></div>
<svg style="left:782px;top:71px;" width="28" height="28" viewBox="0 0 28 28"><g fill="none" stroke="#323130" stroke-width="1.2"><circle cx="16" cy="10" r="5.5"/><path d="M12 14L5 21"/></g></svg>
<div class="t" style="left:801.00px;top:104.69px;font:normal 12.5px 'Liberation Sans';color:#3b3a39;white-space:pre;letter-spacing:-0.303px;">ón</div>
<div style="left:823px;top:70px;width:1px;height:87px;background:#d6d4d2;"></div>
<svg style="left:834px;top:149px;" width="14" height="10" viewBox="0 0 14 10"><path d="M2.5 7.5L7 3L11.5 7.5" fill="none" stroke="#3b3a39" stroke-width="1.1"/></svg>
<div style="left:802px;top:172px;width:48px;height:26px;background:#ffffff;box-sizing:border-box;border:1px solid #c8c6c4;"></div>
<svg style="left:835px;top:179px;" width="14" height="10" viewBox="0 0 14 10"><path d="M3.5 4L6.8 7.3L10.1 4" fill="none" stroke="#4a4a4a" stroke-width="1.8"/></svg>
<div style="left:834px;top:208px;width:21px;height:291px;background:#e6e6e6;"></div>
<div style="left:837px;top:225px;width:15px;height:258px;background:#dadada;"></div>
<div style="left:833px;top:227px;width:1px;height:270px;background:#a09c9a;"></div>
<div style="left:1px;top:496px;width:833px;height:1px;background:#a09c9a;"></div>
<div style="left:837px;top:210px;width:15px;height:15px;background:#ffffff;box-sizing:border-box;border:1px solid #8a8886;"></div>
<svg style="left:837px;top:210px;" width="15" height="15" viewBox="0 0 15 15"><path d="M3.5 9.5L7.5 5L11.5 9.5Z" fill="#605e5c"/></svg>
<div style="left:837px;top:225px;width:15px;height:60px;background:#ffffff;box-sizing:border-box;border:1px solid #8a8886;"></div>
<div style="left:837px;top:483px;width:15px;height:13px;background:#ffffff;box-sizing:border-box;border:1px solid #8a8886;"></div>
<svg style="left:837px;top:483px;" width="15" height="13" viewBox="0 0 15 13"><path d="M3.5 4L7.5 8.5L11.5 4Z" fill="#605e5c"/></svg>
<div style="left:1px;top:497px;width:833px;height:27px;background:#e6e6e6;"></div>
<div style="left:834px;top:499px;width:21px;height:25px;background:#e6e6e6;"></div>
<svg style="left:24px;top:503px;" width="12" height="14" viewBox="0 0 12 14"><path d="M8 3L4 7L8 11Z" fill="#c8c6c4"/></svg>
<svg style="left:52px;top:503px;" width="12" height="14" viewBox="0 0 12 14"><path d="M4 3L8 7L4 11Z" fill="#c8c6c4"/></svg>
<div style="left:101px;top:496px;width:60px;height:25px;background:#ffffff;"></div>
<div style="left:101px;top:496px;width:1px;height:24px;background:#a8a6a4;"></div>
<div style="left:160px;top:496px;width:1px;height:24px;background:#a8a6a4;"></div>
<div style="left:101px;top:519px;width:60px;height:2px;background:#217346;"></div>
<div class="t" style="left:113.00px;top:502.69px;font:bold 12.5px 'Liberation Sans';color:#217346;white-space:pre;letter-spacing:0.251px;">Hoja1</div>
<svg style="left:192px;top:500px;" width="20" height="20" viewBox="0 0 20 20"><g fill="none" stroke="#605e5c" stroke-width="1.2"><circle cx="10" cy="10" r="7.7"/><path d="M10 5.5V14.5M5.5 10H14.5"/></g></svg>
<div style="left:514px;top:505px;width:2px;height:2px;background:#b0b0b0;"></div>
<div style="left:514px;top:509px;width:2px;height:2px;background:#b0b0b0;"></div>
<div style="left:514px;top:513px;width:2px;height:2px;background:#b0b0b0;"></div>
<div style="left:530px;top:503px;width:305px;height:15px;background:#dadada;"></div>
<div style="left:530px;top:503px;width:15px;height:15px;background:#ffffff;box-sizing:border-box;border:1px solid #8a8886;"></div>
<svg style="left:530px;top:503px;" width="15" height="15" viewBox="0 0 15 15"><path d="M9.5 3.5L5 7.5L9.5 11.5Z" fill="#605e5c"/></svg>
<div style="left:544px;top:503px;width:240px;height:15px;background:#ffffff;box-sizing:border-box;border:1px solid #8a8886;"></div>
<div style="left:819px;top:503px;width:15px;height:15px;background:#ffffff;box-sizing:border-box;border:1px solid #8a8886;"></div>
<svg style="left:819px;top:503px;" width="15" height="15" viewBox="0 0 15 15"><path d="M5.5 3.5L10 7.5L5.5 11.5Z" fill="#605e5c"/></svg>
<div class="t" style="left:9.50px;top:529.09px;font:normal 11.5px 'Liberation Sans';color:#3b3a39;white-space:pre;letter-spacing:-0.259px;">Listo</div>
<div class="t" style="left:296.00px;top:529.09px;font:normal 11.5px 'Liberation Sans';color:#3b3a39;white-space:pre;letter-spacing:-0.159px;">Promedio: 43,75</div>
<div class="t" style="left:394.00px;top:529.09px;font:normal 11.5px 'Liberation Sans';color:#3b3a39;white-space:pre;letter-spacing:-0.092px;">Recuento: 4</div>
<div class="t" style="left:471.40px;top:529.09px;font:normal 11.5px 'Liberation Sans';color:#3b3a39;white-space:pre;letter-spacing:-0.514px;">Suma: 175</div>
<div style="left:541px;top:525px;width:40px;height:21px;background:#d2d0ce;"></div>
<svg style="left:552px;top:527px;" width="18" height="17" viewBox="0 0 18 17"><g fill="none" stroke="#3b3a39" stroke-width="1"><rect x="2.5" y="2.5" width="13" height="12"/><path d="M6.8 2.5V14.5M11.2 2.5V14.5M2.5 6.5H15.5M2.5 10.5H15.5"/></g></svg>
<svg style="left:592px;top:527px;" width="18" height="17" viewBox="0 0 18 17"><g fill="none" stroke="#3b3a39" stroke-width="1"><rect x="2.5" y="2.5" width="13" height="12"/><rect x="5.5" y="4.5" width="7" height="8"/><path d="M7 6.5H11M7 8.5H11M7 10.5H11"/></g></svg>
<svg style="left:632px;top:527px;" width="18" height="17" viewBox="0 0 18 17"><g fill="none" stroke="#3b3a39" stroke-width="1"><path d="M2.5 14.5V2.5H15.5V14.5"/><path d="M6.5 2.5V9.5H11.5V2.5M2.5 12.5H15.5"/></g></svg>
<div style="left:667px;top:535px;width:7px;height:1px;background:#3b3a39;"></div>
<div style="left:680px;top:535px;width:100px;height:1px;background:#605e5c;"></div>
<div style="left:728px;top:530px;width:5px;height:11px;background:#605e5c;"></div>
<div style="left:785px;top:535px;width:8px;height:1px;background:#3b3a39;"></div>
<div style="left:788.5px;top:531.5px;width:1px;height:8px;background:#3b3a39;"></div>
<div class="t" style="left:806.50px;top:529.09px;font:normal 11.5px 'Liberation Sans';color:#3b3a39;white-space:pre;letter-spacing:-0.622px;">100 %</div>
<div style="left:489px;top:91px;width:314px;height:335px;background:#ffffff;box-sizing:border-box;border:1px solid #d0d0d0;border-radius:4px;box-shadow:0 1px 3px rgba(0,0,0,0.06);"></div>
<svg style="left:506px;top:105px;" width="32" height="30" viewBox="0 0 32 30"><g stroke-width="1">
<rect x="1.5" y="1.5" width="27" height="21.5" fill="#f6f6f6" stroke="#3b3a39"/>
<path d="M1.5 8.5H28.5M1.5 15.5H28.5M8.5 1.5V23M21.5 1.5V23" stroke="#3b3a39" fill="none"/>
<rect x="8.5" y="8.5" width="13" height="7" fill="#f9db8e" stroke="#e8511f" stroke-width="1.2"/>
<rect x="13" y="14.5" width="15.5" height="13" fill="#ffffff" stroke="#3b3a39" stroke-width="1.1"/>
<path d="M23.5 17.8L18 20.5L23.5 23.2M18 25.2H23.5" fill="none" stroke="#3b3a39" stroke-width="0.9"/>
</g></svg>
<div class="t" style="left:543.60px;top:113.19px;font:bold 12.5px 'Liberation Sans';color:#262626;white-space:pre;letter-spacing:-0.648px;"><u>R</u>eglas para resaltar celdas</div>
<svg style="left:506px;top:152px;" width="32" height="30" viewBox="0 0 32 30"><g stroke-width="1">
<rect x="1.5" y="1.5" width="27" height="21.5" fill="#f6f6f6" stroke="#3b3a39"/>
<path d="M1.5 8.5H28.5M1.5 15.5H28.5M8.5 1.5V23M21.5 1.5V23" stroke="#3b3a39" fill="none"/>
<rect x="8.5" y="1.5" width="13" height="21.5" fill="#f9db8e" stroke="#e8511f" stroke-width="1.2"/>
<path d="M14.5 13V3M10.5 7L14.5 3L18.5 7" fill="none" stroke="#3b3a39" stroke-width="1.1"/>
<rect x="13" y="14.5" width="15.5" height="13" fill="#ffffff" stroke="#3b3a39" stroke-width="1.1"/>
<text x="14.8" y="25.3" font-family="Liberation Sans" font-size="10" fill="#505050">10</text>
</g></svg>
<div class="t" style="left:543.60px;top:160.69px;font:bold 12.5px 'Liberation Sans';color:#262626;white-space:pre;letter-spacing:-0.534px;">R<u>e</u>glas para valores superiores e inferiores</div>
<div style="left:535px;top:190px;width:267px;height:1px;background:#e1dfdd;"></div>
<svg style="left:506px;top:204px;" width="30" height="24" viewBox="0 0 30 24"><g stroke-width="1">
<rect x="1.5" y="1.5" width="27" height="21.5" fill="#f6f6f6" stroke="#3b3a39"/>
<path d="M1.5 8.5H28.5M1.5 15.5H28.5M6.5 1.5V23M23.5 1.5V23" stroke="#3b3a39" fill="none"/>
<path d="M6.5 1.5H14.5V8.5H9.5V15.5H12.5V23H6.5Z" fill="#8cc2ec" stroke="#0f6cbd" stroke-width="1.3"/>
</g></svg>
<div class="t" style="left:543.60px;top:211.69px;font:bold 12.5px 'Liberation Sans';color:#262626;white-space:pre;letter-spacing:-0.672px;">Barras de <u>d</u>atos</div>
<div style="left:490px;top:240px;width:312px;height:48px;background:#d2d2d2;"></div>
<svg style="left:506px;top:252px;" width="30" height="24" viewBox="0 0 30 24"><defs><pattern id="pt1" width="3" height="3" patternUnits="userSpaceOnUse"><rect width="3" height="3" fill="#c8c8c8"/><circle cx="1.5" cy="1.5" r="0.9" fill="#e8511f"/></pattern></defs><g stroke-width="1">
<rect x="1.5" y="1.5" width="27" height="21.5" fill="#ffffff" stroke="#3b3a39"/>
<path d="M1.5 8.5H28.5M1.5 15.5H28.5M6.5 1.5V23M23.5 1.5V23" stroke="#3b3a39" fill="none"/>
<rect x="6.5" y="8.5" width="17" height="7" fill="#f9dd90" stroke="#e8511f" stroke-width="1.2"/>
<rect x="6.5" y="15.5" width="17" height="7.5" fill="url(#pt1)" stroke="#e8511f" stroke-width="1.2"/>
<rect x="6.5" y="1.5" width="17" height="7" fill="#8cc2ec" stroke="#0f6cbd" stroke-width="1.3"/>
</g></svg>
<div class="t" style="left:543.60px;top:259.69px;font:bold 12.5px 'Liberation Sans';color:#262626;white-space:pre;letter-spacing:-0.917px;">E<u>s</u>calas de color</div>
<svg style="left:506px;top:300px;" width="30" height="24" viewBox="0 0 30 24"><g stroke-width="1">
<rect x="1.5" y="1.5" width="27" height="21.5" fill="#f6f6f6" stroke="#3b3a39"/>
<path d="M1.5 8.5H28.5M1.5 15.5H28.5M6.5 1.5V23M23.5 1.5V23" stroke="#3b3a39" fill="none"/>
<circle cx="9.6" cy="5" r="1.7" fill="#2b88d8"/><circle cx="9.6" cy="12" r="1.7" fill="#e8511f"/><circle cx="9.6" cy="19.2" r="1.7" fill="#2b88d8"/>
<path d="M16 5H21M16 12H21M16 19.2H21" stroke="#3b3a39" stroke-width="1.3"/>
</g></svg>
<div class="t" style="left:543.60px;top:307.69px;font:bold 12.5px 'Liberation Sans';color:#262626;white-space:pre;letter-spacing:-0.753px;"><u>C</u>onjuntos de iconos</div>
<div style="left:490px;top:337px;width:312px;height:1px;background:#e1dfdd;"></div>
<svg style="left:502px;top:345px;" width="18" height="16" viewBox="0 0 18 16"><g stroke-width="1">
<rect x="1.5" y="1.5" width="15" height="12.5" fill="#f6f6f6" stroke="#3b3a39"/>
<path d="M1.5 5.8H16.5M1.5 9.8H16.5M5.5 1.5V14M12.5 1.5V14" stroke="#3b3a39" fill="none"/>
<rect x="5.5" y="5.8" width="7" height="4" fill="#f9db8e" stroke="#e8511f" stroke-width="1.1"/></g></svg>
<div class="t" style="left:528.40px;top:346.69px;font:normal 12.5px 'Liberation Sans';color:#262626;white-space:pre;letter-spacing:-0.488px;"><u>N</u>ueva regla...</div>
<svg style="left:502px;top:373px;" width="18" height="16" viewBox="0 0 18 16"><g stroke-width="1">
<rect x="1.5" y="1.5" width="15" height="12.5" fill="#f6f6f6" stroke="#3b3a39"/>
<path d="M1.5 5.8H16.5M1.5 9.8H16.5M5.5 1.5V14M12.5 1.5V14" stroke="#3b3a39" fill="none"/>
<rect x="5.5" y="5.8" width="7" height="4" fill="#f9db8e" stroke="#e8511f" stroke-width="1.1"/><path d="M9 13L15 7L17.5 9.5L11.5 15.5Z" fill="#ffffff" stroke="#8f3fb5" stroke-width="1.3"/><path d="M11 11L13.5 13.5" stroke="#8f3fb5" stroke-width="1.2"/></g></svg>
<div class="t" style="left:528.40px;top:375.39px;font:normal 12.5px 'Liberation Sans';color:#262626;white-space:pre;letter-spacing:-0.588px;"><u>B</u>orrar reglas</div>
<svg style="left:502px;top:400px;" width="18" height="17" viewBox="0 0 18 17"><g stroke-width="1" fill="none">
<path d="M1.5 14.5V1.5H12.5" stroke="#3b3a39"/>
<rect x="3.5" y="3.5" width="13" height="12" fill="#f6f6f6" stroke="#3b3a39"/>
<path d="M3.5 7.5H16.5M3.5 11.5H16.5M7.5 3.5V15.5M12.5 3.5V15.5" stroke="#3b3a39"/>
<rect x="7.5" y="7.5" width="5" height="4" fill="#f9db8e" stroke="#e8511f" stroke-width="1.1"/>
</g></svg>
<div class="t" style="left:528.40px;top:403.19px;font:normal 12.5px 'Liberation Sans';color:#262626;white-space:pre;letter-spacing:-0.326px;"><u>A</u>dministrar reglas...</div>
<svg style="left:784px;top:111px;" width="12" height="12" viewBox="0 0 12 12"><path d="M4 1.5L8.5 6L4 10.5" fill="none" stroke="#3b3a39" stroke-width="1.1"/></svg>
<svg style="left:784px;top:159px;" width="12" height="12" viewBox="0 0 12 12"><path d="M4 1.5L8.5 6L4 10.5" fill="none" stroke="#3b3a39" stroke-width="1.1"/></svg>
<svg style="left:784px;top:209px;" width="12" height="12" viewBox="0 0 12 12"><path d="M4 1.5L8.5 6L4 10.5" fill="none" stroke="#3b3a39" stroke-width="1.1"/></svg>
<svg style="left:784px;top:258px;" width="12" height="12" viewBox="0 0 12 12"><path d="M4 1.5L8.5 6L4 10.5" fill="none" stroke="#3b3a39" stroke-width="1.1"/></svg>
<svg style="left:784px;top:306px;" width="12" height="12" viewBox="0 0 12 12"><path d="M4 1.5L8.5 6L4 10.5" fill="none" stroke="#3b3a39" stroke-width="1.1"/></svg>
<svg style="left:784px;top:375px;" width="12" height="12" viewBox="0 0 12 12"><path d="M4 1.5L8.5 6L4 10.5" fill="none" stroke="#3b3a39" stroke-width="1.1"/></svg>
<div style="left:802px;top:240px;width:60px;height:162px;background:#ffffff;box-sizing:border-box;border:1px solid #d0d0d0;border-radius:4px;"></div>
<svg style="left:809px;top:249px;" width="29" height="27" viewBox="0 0 29 27"><g>
<rect x="0.5" y="0.5" width="27.5" height="25.5" fill="#ffffff"/>
<rect x="6.2" y="0.5" width="15.1" height="5.1" fill="#63be7b"/><path d="M14 3.2H20" stroke="#262626" stroke-width="1.2"/><rect x="6.2" y="5.6" width="15.1" height="5.200000000000001" fill="#c8ddb0"/><path d="M14 8.3H20" stroke="#262626" stroke-width="1.2"/><rect x="6.2" y="10.8" width="15.1" height="5.1" fill="#ffe699"/><path d="M14 13.5H20" stroke="#262626" stroke-width="1.2"/><rect x="6.2" y="15.9" width="15.1" height="5.200000000000001" fill="#f5b98a"/><path d="M14 18.6H20" stroke="#262626" stroke-width="1.2"/><rect x="6.2" y="21.1" width="15.1" height="4.899999999999999" fill="#e8532a"/><path d="M14 23.8H20" stroke="#262626" stroke-width="1.2"/>
<path d="M0.5 5.6H28M0.5 10.8H28M0.5 15.9H28M0.5 21.1H28M6.2 0.5V26M21.3 0.5V26" stroke="#7a7a7a" stroke-width="1" fill="none"/>
<rect x="0.5" y="0.5" width="27.5" height="25.5" fill="none" stroke="#7a7a7a" stroke-width="1"/>
</g></svg>
<svg style="left:809px;top:289px;" width="29" height="27" viewBox="0 0 29 27"><g>
<rect x="0.5" y="0.5" width="27.5" height="25.5" fill="#ffffff"/>
<rect x="6.2" y="0.5" width="15.1" height="5.1" fill="#2e86d0"/><path d="M14 3.2H20" stroke="#262626" stroke-width="1.2"/><rect x="6.2" y="5.6" width="15.1" height="5.200000000000001" fill="#b4d4ee"/><path d="M14 8.3H20" stroke="#262626" stroke-width="1.2"/><rect x="6.2" y="10.8" width="15.1" height="5.1" fill="#ffffff"/><path d="M14 13.5H20" stroke="#262626" stroke-width="1.2"/><rect x="6.2" y="15.9" width="15.1" height="5.200000000000001" fill="#d0d0d0"/><path d="M14 18.6H20" stroke="#262626" stroke-width="1.2"/><rect x="6.2" y="21.1" width="15.1" height="4.899999999999999" fill="#e8532a"/><path d="M14 23.8H20" stroke="#262626" stroke-width="1.2"/>
<path d="M0.5 5.6H28M0.5 10.8H28M0.5 15.9H28M0.5 21.1H28M6.2 0.5V26M21.3 0.5V26" stroke="#7a7a7a" stroke-width="1" fill="none"/>
<rect x="0.5" y="0.5" width="27.5" height="25.5" fill="none" stroke="#7a7a7a" stroke-width="1"/>
</g></svg>
<div style="left:803px;top:322px;width:40px;height:40px;background:#d8d8d8;"></div>
<svg style="left:809px;top:329px;" width="29" height="27" viewBox="0 0 29 27"><g>
<rect x="0.5" y="0.5" width="27.5" height="25.5" fill="#ffffff"/>
<rect x="6.2" y="0.5" width="15.1" height="5.1" fill="#63be7b"/><path d="M14 3.2H20" stroke="#262626" stroke-width="1.2"/><rect x="6.2" y="5.6" width="15.1" height="5.200000000000001" fill="#a8d8b4"/><path d="M14 8.3H20" stroke="#262626" stroke-width="1.2"/><rect x="6.2" y="10.8" width="15.1" height="5.1" fill="#c8e8d0"/><path d="M14 13.5H20" stroke="#262626" stroke-width="1.2"/><rect x="6.2" y="15.9" width="15.1" height="5.200000000000001" fill="#e8f4ea"/><path d="M14 18.6H20" stroke="#262626" stroke-width="1.2"/><rect x="6.2" y="21.1" width="15.1" height="4.899999999999999" fill="#ffffff"/><path d="M14 23.8H20" stroke="#262626" stroke-width="1.2"/>
<path d="M0.5 5.6H28M0.5 10.8H28M0.5 15.9H28M0.5 21.1H28M6.2 0.5V26M21.3 0.5V26" stroke="#7a7a7a" stroke-width="1" fill="none"/>
<rect x="0.5" y="0.5" width="27.5" height="25.5" fill="none" stroke="#7a7a7a" stroke-width="1"/>
</g></svg>
<svg style="left:849px;top:249px;" width="10" height="27" viewBox="0 0 10 27"><g fill="#ffffff" stroke="#7a7a7a" stroke-width="1"><rect x="0.5" y="0.5" width="12" height="25.5"/><path d="M0.5 5.6H12M0.5 10.8H12M0.5 15.9H12M0.5 21.1H12M6.2 0.5V26" fill="none"/></g></svg>
<svg style="left:849px;top:289px;" width="10" height="27" viewBox="0 0 10 27"><g fill="#ffffff" stroke="#7a7a7a" stroke-width="1"><rect x="0.5" y="0.5" width="12" height="25.5"/><path d="M0.5 5.6H12M0.5 10.8H12M0.5 15.9H12M0.5 21.1H12M6.2 0.5V26" fill="none"/></g></svg>
<svg style="left:849px;top:329px;" width="10" height="27" viewBox="0 0 10 27"><g fill="#ffffff" stroke="#7a7a7a" stroke-width="1"><rect x="0.5" y="0.5" width="12" height="25.5"/><path d="M0.5 5.6H12M0.5 10.8H12M0.5 15.9H12M0.5 21.1H12M6.2 0.5V26" fill="none"/></g></svg>
<div style="left:803px;top:371px;width:53px;height:1px;background:#e1dfdd;"></div>
<div class="t" style="left:840.60px;top:380.69px;font:normal 12.5px 'Liberation Sans';color:#262626;white-space:pre;"><u>M</u>ás reglas...</div>
<svg style="left:810px;top:334px;" width="16" height="24" viewBox="0 0 16 24"><path d="M3.5 2.5V19.5L7.5 15.5L10.5 22L13 21L10 14.5H15.5Z" fill="#ffffff" stroke="#000000" stroke-width="1"/></svg>
</body></html>
